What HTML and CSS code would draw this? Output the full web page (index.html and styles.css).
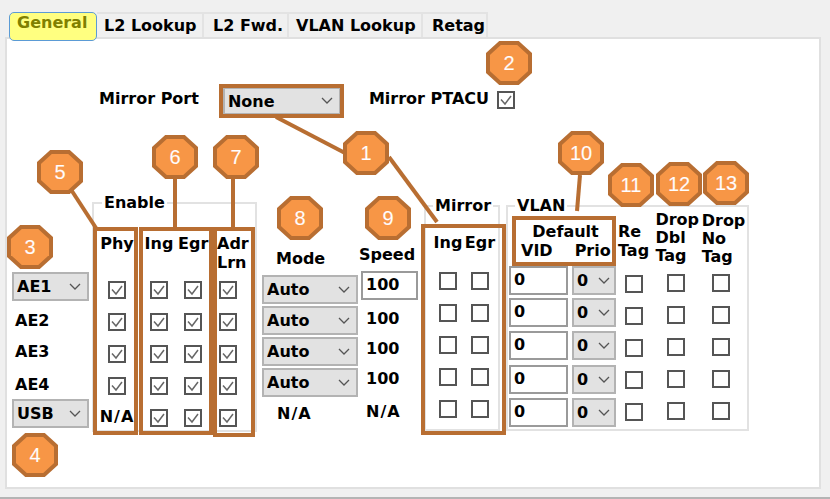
FILE: index.html
```html
<!DOCTYPE html>
<html lang="en">
<head>
  <meta charset="UTF-8" />
  <title>Port settings - General</title>
  <link rel="stylesheet" href="styles.css">
</head>
<body>
  <div class="tabs">
    <div class="tab active">General</div>
    <div class="tab">L2 Lookup</div>
    <div class="tab">L2 Fwd.</div>
    <div class="tab">VLAN Lookup</div>
    <div class="tab">Retag</div>
  </div>

  <div class="panel">
    <div class="top-row">
      <span class="mirror-port-label">Mirror Port</span>
      <select class="sel mirror-port"><option>None</option></select>
      <span class="ptacu-label">Mirror PTACU</span>
      <input class="ptacu" type="checkbox" checked>
    </div>

    <div class="main">
      <div class="ports">
        <div class="port-row first"><select class="sel port-sel"><option>AE1</option></select></div>
        <div class="port-row name r2">AE2</div>
        <div class="port-row name r3">AE3</div>
        <div class="port-row name r4">AE4</div>
        <select class="sel port-sel usb"><option>USB</option></select>
      </div>

      <fieldset class="group enable">
        <legend>Enable</legend>
        <div class="enable-grid">
          <div class="head">Phy</div>
          <div class="head">Ing</div>
          <div class="head egr">Egr</div>
          <div class="head adr">Adr<br>Lrn</div>

          <div class="cell"><input type="checkbox" checked></div>
          <div class="cell"><input type="checkbox" checked></div>
          <div class="cell"><input type="checkbox" checked></div>
          <div class="cell"><input type="checkbox" checked></div>

          <div class="cell"><input type="checkbox" checked></div>
          <div class="cell"><input type="checkbox" checked></div>
          <div class="cell"><input type="checkbox" checked></div>
          <div class="cell"><input type="checkbox" checked></div>

          <div class="cell"><input type="checkbox" checked></div>
          <div class="cell"><input type="checkbox" checked></div>
          <div class="cell"><input type="checkbox" checked></div>
          <div class="cell"><input type="checkbox" checked></div>

          <div class="cell"><input type="checkbox" checked></div>
          <div class="cell"><input type="checkbox" checked></div>
          <div class="cell"><input type="checkbox" checked></div>
          <div class="cell"><input type="checkbox" checked></div>

          <div class="cell na">N/A</div>
          <div class="cell"><input type="checkbox" checked></div>
          <div class="cell"><input type="checkbox" checked></div>
          <div class="cell"><input type="checkbox" checked></div>
        </div>
      </fieldset>

      <div class="mode">
        <div class="mode-head">Mode</div>
        <select class="sel mode-sel"><option>Auto</option></select>
        <select class="sel mode-sel"><option>Auto</option></select>
        <select class="sel mode-sel"><option>Auto</option></select>
        <select class="sel mode-sel"><option>Auto</option></select>
        <div class="mode-na">N/A</div>
      </div>

      <div class="speed">
        <div class="speed-head">Speed</div>
        <input class="txt speed-input" type="text" value="100">
        <div class="speed-val">100</div>
        <div class="speed-val">100</div>
        <div class="speed-val">100</div>
        <div class="speed-na">N/A</div>
      </div>

      <fieldset class="group mirror">
        <legend>Mirror</legend>
        <div class="mirror-grid">
          <div class="head">Ing</div>
          <div class="head">Egr</div>
          <div class="cell"><input type="checkbox"></div>
          <div class="cell"><input type="checkbox"></div>
          <div class="cell"><input type="checkbox"></div>
          <div class="cell"><input type="checkbox"></div>
          <div class="cell"><input type="checkbox"></div>
          <div class="cell"><input type="checkbox"></div>
          <div class="cell"><input type="checkbox"></div>
          <div class="cell"><input type="checkbox"></div>
          <div class="cell"><input type="checkbox"></div>
          <div class="cell"><input type="checkbox"></div>
        </div>
      </fieldset>

      <fieldset class="group vlan">
        <legend>VLAN</legend>
        <div class="vlan-body">
          <div class="vlan-left">
            <div class="default-head">Default</div>
            <div class="vid-prio-head"><span>VID</span><span class="prio-head">Prio</span></div>
            <div class="vlan-row"><input class="txt vid" type="text" value="0"><select class="sel prio"><option>0</option></select></div>
            <div class="vlan-row r2"><input class="txt vid" type="text" value="0"><select class="sel prio"><option>0</option></select></div>
            <div class="vlan-row r3"><input class="txt vid" type="text" value="0"><select class="sel prio"><option>0</option></select></div>
            <div class="vlan-row r4"><input class="txt vid" type="text" value="0"><select class="sel prio"><option>0</option></select></div>
            <div class="vlan-row r5"><input class="txt vid" type="text" value="0"><select class="sel prio"><option>0</option></select></div>
          </div>
          <div class="tag-col re">
            <div class="tag-head">Re<br>Tag</div>
            <input type="checkbox"><input type="checkbox"><input type="checkbox"><input type="checkbox"><input type="checkbox">
          </div>
          <div class="tag-col dbl">
            <div class="tag-head">Drop<br>Dbl<br>Tag</div>
            <input type="checkbox"><input type="checkbox"><input type="checkbox"><input type="checkbox"><input type="checkbox">
          </div>
          <div class="tag-col no">
            <div class="tag-head">Drop<br>No<br>Tag</div>
            <input type="checkbox"><input type="checkbox"><input type="checkbox"><input type="checkbox"><input type="checkbox">
          </div>
        </div>
      </fieldset>
    </div>
  </div>
  <div class="footer-line"></div>

  <!-- callouts drawn over the form -->
  <svg class="callouts" width="830" height="499" viewBox="0 0 830 499">
    <defs>
      <polygon id="oct" points="-9,-20 9,-20 21,-9 21,9 9,20 -9,20 -21,9 -21,-9" />
    </defs>
    <g class="lines">
      <line x1="276" y1="117" x2="345" y2="153" />
      <line x1="389" y1="157" x2="437" y2="222" />
      <line x1="70" y1="188" x2="96" y2="228" />
      <line x1="175" y1="176" x2="175" y2="228" />
      <line x1="233" y1="176" x2="233" y2="228" />
      <line x1="580" y1="175" x2="577" y2="211" />
    </g>
    <g class="boxes">
      <rect x="221" y="86" width="121" height="30" />
      <rect x="95" y="229" width="41" height="204" />
      <rect x="141" y="229" width="70" height="204" />
      <rect x="215" y="229" width="38" height="206" />
      <rect x="423" y="226" width="81" height="207" />
      <rect x="514" y="218" width="100" height="46" />
    </g>
    <g class="octs">
      <use href="#oct" x="366" y="153" />
      <use href="#oct" x="509" y="63" />
      <use href="#oct" x="30" y="247" />
      <use href="#oct" x="35" y="455" />
      <use href="#oct" x="60" y="172" />
      <use href="#oct" x="175" y="157" />
      <use href="#oct" x="236" y="157" />
      <use href="#oct" x="300" y="218" />
      <use href="#oct" x="388" y="218" />
      <use href="#oct" x="581" y="153" />
      <use href="#oct" x="631" y="185" />
      <use href="#oct" x="679" y="184" />
      <use href="#oct" x="726" y="183" />
    </g>
    <g class="nums">
      <text x="366" y="160">1</text>
      <text x="509" y="70">2</text>
      <text x="30" y="254">3</text>
      <text x="35" y="462">4</text>
      <text x="60" y="179">5</text>
      <text x="175" y="164">6</text>
      <text x="236" y="164">7</text>
      <text x="300" y="225">8</text>
      <text x="388" y="225">9</text>
      <text x="581" y="160">10</text>
      <text x="631" y="192">11</text>
      <text x="679" y="191">12</text>
      <text x="726" y="190">13</text>
    </g>
  </svg>
</body>
</html>
```

FILE: styles.css
```css
* {
  box-sizing: border-box;
}
html, body {
  margin: 0;
  height: 499px;
  overflow: hidden;
}
body {
  position: relative;
  background: #f0f0f0;
  color: #000;
  font-family: "DejaVu Sans", sans-serif;
  font-size: 16px;
  font-weight: bold;
  line-height: 19px;
}

/* tabs */
.tabs {
  display: flex;
  align-items: flex-start;
  height: 41px;
  margin-bottom: -4px;
  padding: 12px 0 0 9px;
  position: relative;
  z-index: 1;
  white-space: nowrap;
}
.tab {
  flex: none;
  height: 25px;
  padding: 0 0 0 6px;
  background: #f0f0f0;
  border: 2px solid #e3e3e3;
  border-bottom: 0;
  border-left-width: 0;
  line-height: 24px;
}
.tab.active {
  height: 29px;
  width: 88px;
  padding: 0 0 0 7px;
  background: #ffff80;
  border: 1px solid #5b9bd5;
  border-radius: 5px;
  color: #808000;
  line-height: 20px;
}
.tab:nth-child(2) { width: 107px; padding-left: 7px; }
.tab:nth-child(3) { width: 85px; padding-left: 9px; }
.tab:nth-child(4) { width: 134px; padding-left: 7px; }
.tab:nth-child(5) { width: 65px; padding-left: 9px; }

.panel {
  width: 816px;
  height: 452px;
  margin-left: 5px;
  padding-top: 48px;
  background: #fff;
  border: 2px solid #e0e0e0;
}
.footer-line {
  height: 2px;
  margin-top: 8px;
  background: #b4b4b4;
}

/* form controls */
.sel {
  appearance: none;
  margin: 0;
  padding: 0 0 0 3px;
  background: #e2e2e2 url("data:image/svg+xml,%3Csvg xmlns='http://www.w3.org/2000/svg' width='12' height='8'%3E%3Cpath d='M1 1l5 5 5-5' fill='none' stroke='%23555' stroke-width='1.3'/%3E%3C/svg%3E") no-repeat right 6px center;
  border: 2px solid #b3b3b3;
  border-radius: 0;
  color: #000;
  font: inherit;
}
.txt {
  margin: 0;
  padding: 0 0 3px 3px;
  background: #fff;
  border: 2px solid #9a9a9a;
  border-radius: 0;
  color: #000;
  font: inherit;
  outline: none;
}
input[type="checkbox"] {
  appearance: none;
  display: block;
  width: 18px;
  height: 18px;
  margin: 0;
  background: #fff;
  border: 2px solid #555;
}
input[type="checkbox"]:checked {
  background: #fff url("data:image/svg+xml,%3Csvg xmlns='http://www.w3.org/2000/svg' width='14' height='14'%3E%3Cpath d='M2 6.5l4 4.5 6-8' fill='none' stroke='%23666' stroke-width='1.5'/%3E%3C/svg%3E") no-repeat center;
}

/* top row */
.top-row {
  display: flex;
  align-items: flex-start;
  height: 28px;
  padding-left: 92px;
}
.mirror-port-label {
  line-height: 24px;
}
.mirror-port {
  width: 118px;
  height: 28px;
  margin-left: 24px;
}
.ptacu-label {
  margin-left: 28px;
  line-height: 24px;
}
.ptacu {
  margin: 4px 0 0 8px !important;
}

/* main row, every column sets its own start */
.main {
  display: flex;
  align-items: flex-start;
  margin-top: 75px;
}
.ports {
  width: 77px;
  margin: 82px 0 0 5px;
}
.port-sel {
  display: block;
  width: 77px;
  height: 29px;
}
.port-row.first { height: 31px; }
.port-row.name { padding-left: 3px; }
.port-row.r2 { height: 33px; line-height: 35px; }
.port-row.r3 { height: 31px; line-height: 31px; }
.port-row.r4 { height: 32px; line-height: 35px; }

.group {
  min-width: 0;
  margin: 0;
  padding: 0;
  border: 2px solid #e2e2e2;
}
.group legend {
  padding: 0 2px;
}

.enable {
  width: 165px;
  height: 239px;
  margin: 3px 0 0 3px;
}
.enable legend {
  margin-left: 8px;
}
.enable-grid {
  display: grid;
  grid-template-columns: 46px 38px 30px 40px;
  grid-template-rows: 62px repeat(5, 32px);
}
.head {
  padding-top: 22px;
  text-align: center;
  white-space: nowrap;
}
.head.egr {
  padding-right: 2px;
}
.head.adr {
  padding-left: 9px;
  text-align: left;
}
.cell {
  display: flex;
  align-items: center;
  justify-content: center;
}
.cell.na {
  padding-bottom: 4px;
  white-space: nowrap;
  letter-spacing: 1px;
}

.mode {
  width: 96px;
  margin: 58px 0 0 5px;
}
.mode-head {
  height: 20px;
  margin-bottom: 7px;
  padding-left: 14px;
  line-height: 22px;
}
.mode-sel {
  display: block;
  width: 96px;
  height: 29px;
  margin-bottom: 2px;
}
.mode-na {
  margin-top: 7px;
  padding-left: 15px;
  line-height: 20px;
  letter-spacing: 1px;
}

.speed {
  width: 57px;
  margin: 55px 0 0 3px;
}
.speed-head {
  height: 20px;
  margin: 0 -2px 6px -2px;
  line-height: 20px;
}
.speed-input {
  display: block;
  width: 57px;
  height: 29px;
}
.speed-val {
  height: 30px;
  padding-left: 5px;
  line-height: 30px;
}
.speed-input + .speed-val {
  margin-top: 4px;
}
.speed-na {
  margin-top: 8px;
  padding-left: 5px;
  line-height: 20px;
  letter-spacing: 1px;
}

.mirror {
  width: 76px;
  height: 235px;
  margin: 6px 0 0 6px;
}
.mirror legend {
  margin-left: 7px;
}
.mirror-grid {
  display: grid;
  grid-template-columns: 32px 32px;
  grid-template-rows: 50px repeat(5, 32px);
  padding-left: 6px;
}
.mirror-grid .head {
  padding-top: 18px;
}

.vlan {
  width: 243px;
  height: 235px;
  margin: 6px 0 0 6px;
}
.vlan legend {
  margin-left: 7px;
}
.vlan-body {
  display: flex;
  align-items: flex-start;
}
.vlan-left {
  width: 107px;
  margin-left: 1px;
  padding-top: 7px;
}
.default-head {
  padding-left: 6px;
  text-align: center;
}
.vid-prio-head {
  display: flex;
  height: 25px;
  padding-left: 12px;
}
.prio-head {
  margin-left: 22px;
}
.vlan-row {
  display: flex;
  gap: 4px;
  height: 32px;
}
.vlan-row.r2 { height: 33px; }
.vlan-row.r3 { height: 34px; }
.vlan-row.r4 { height: 33px; }
.vid {
  width: 59px;
  height: 29px;
}
.prio {
  width: 44px;
  height: 29px;
  padding-left: 3px;
  background-position: right 4px center;
}
.tag-col input + input {
  margin-top: 14px;
}
.tag-col.re {
  width: 38px;
  margin-left: 2px;
  padding-top: 7px;
}
.tag-col.re .tag-head { height: 53px; }
.tag-col.re input { margin-left: 7px; }
.tag-col.dbl {
  width: 47px;
  margin-top: -4px;
}
.tag-col.dbl .tag-head { height: 63px; line-height: 18px; }
.tag-col.dbl input { margin-left: 12px; }
.tag-col.no {
  width: 46px;
  margin-top: -3px;
}
.tag-col.no .tag-head { height: 62px; line-height: 18px; }
.tag-col.no input { margin-left: 10px; }

/* callouts */
.callouts {
  position: absolute;
  top: 0;
  left: 0;
  z-index: 2;
  pointer-events: none;
}
.lines line {
  stroke: #b86e32;
  stroke-width: 4;
}
.boxes rect {
  fill: none;
  stroke: #b86e32;
  stroke-width: 4;
}
.octs use {
  fill: #f79646;
  stroke: #b86e32;
  stroke-width: 4;
}
.nums text {
  fill: #fff;
  stroke: #fbd9cf;
  stroke-width: 0.2;
  font-family: "Liberation Sans", sans-serif;
  font-size: 20px;
  font-weight: normal;
  text-anchor: middle;
}
```
